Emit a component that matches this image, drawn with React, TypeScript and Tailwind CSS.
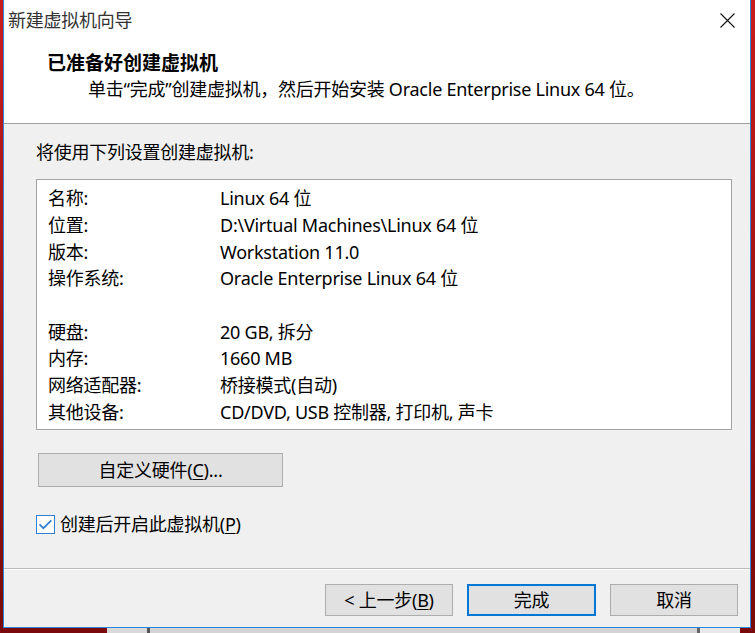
import React from 'react'

const rows: [string, string][] = [
  ['名称:', 'Linux 64 位'],
  ['位置:', 'D:\\Virtual Machines\\Linux 64 位'],
  ['版本:', 'Workstation 11.0'],
  ['操作系统:', 'Oracle Enterprise Linux 64 位'],
  ['', ''],
  ['硬盘:', '20 GB, 拆分'],
  ['内存:', '1660 MB'],
  ['网络适配器:', '桥接模式(自动)'],
  ['其他设备:', 'CD/DVD, USB 控制器, 打印机, 声卡'],
]

function Key({ k }: { k: string }) {
  return <span className="underline underline-offset-2 decoration-1">{k}</span>
}

export default function App() {
  return (
    <div className="w-[755px] h-[633px] overflow-hidden bg-linear-to-b from-[#c81c1e] to-[#7a0a0b] font-['Noto_Sans','Noto_Sans_CJK_SC',sans-serif] text-[18px] tracking-[-0.25px] text-black">
      {/* Window */}
      <div className="ml-[3px] w-[748px] h-[628px] flex flex-col border-x border-b border-[#2a86d8] bg-[#f0f0f0]">
        {/* Title bar + header */}
        <div className="h-[124px] bg-white border-b border-[#a0a0a0]">
          <div className="flex h-[40px] items-center justify-between">
            <span className="pl-[4px] leading-[26px] text-[#333]">新建虚拟机向导</span>
            <span className="flex w-[46px] h-full items-center justify-center">
              <svg width="15" height="15" viewBox="0 0 15 15">
                <path d="M0.5 0.5 L14.5 14.5 M14.5 0.5 L0.5 14.5" stroke="#111" strokeWidth="1.1" fill="none" />
              </svg>
            </span>
          </div>
          <div className="mt-[10px] pl-[43px] text-[19px] font-bold leading-[26px] tracking-normal">已准备好创建虚拟机</div>
          <div className="pl-[84px] leading-[26px]">
            单击<span className="font-['Noto_Sans']">“</span>完成<span className="font-['Noto_Sans']">”</span>创建虚拟机，然后开始安装 Oracle Enterprise Linux 64 位。
          </div>
        </div>

        {/* Body */}
        <div className="h-[445px] pl-[32px] border-b border-[#bcbcbc] flex flex-col">
          <div className="mt-[15px] leading-[26px]">将使用下列设置创建虚拟机:</div>
          <div className="mt-[14px] w-[696px] h-[251px] bg-white border border-[#a3a3a3] pt-[5px] pl-[11px]">
            {rows.map(([label, value], i) => (
              <div key={i} className="flex h-[26.7px] items-center leading-[26px]">
                <span className="w-[172px] shrink-0">{label}</span>
                <span>{value}</span>
              </div>
            ))}
          </div>
          <button className="mt-[23px] ml-[2px] w-[245px] h-[34px] bg-[#e1e1e1] border border-[#adadad] leading-[26px]">
            自定义硬件(<Key k="C" />)...
          </button>
          <label className="mt-[25px] flex h-[24px] items-center gap-[5px]">
            <svg width="19" height="19" viewBox="0 0 19 19">
              <rect x="0.5" y="0.5" width="18" height="18" fill="#fff" stroke="#2f80d4" />
              <path d="M3.5 9.3 L7.4 13.2 L15.3 5.3" stroke="#2f80d4" strokeWidth="1.7" fill="none" />
            </svg>
            <span className="leading-[26px]">创建后开启此虚拟机(<Key k="P" />)</span>
          </label>
        </div>

        {/* Footer */}
        <div className="flex-1 border-t border-white flex justify-end gap-[14px] pr-[12px] pt-[14px]">
          <button className="w-[128px] h-[32px] bg-[#e1e1e1] border border-[#adadad] leading-[26px]">
            &lt; 上一步(<Key k="B" />)
          </button>
          <button className="w-[129px] h-[32px] bg-[#e1e1e1] border-2 border-[#0078d7] leading-[26px]">
            完成
          </button>
          <button className="w-[128px] h-[32px] bg-[#e1e1e1] border border-[#adadad] leading-[26px]">
            取消
          </button>
        </div>
      </div>

      {/* Desktop strip beneath the window */}
      <div className="flex h-[5px]">
        <div className="w-[107px]" />
        <div className="w-[40px] bg-[#d9d9d9]" />
        <div className="w-[3px] bg-[#555]" />
        <div className="w-[547px] bg-[#d4d4d4]" />
        <div className="w-[3px] bg-[#666]" />
        <div className="w-[40px] bg-[#e8e8e8]" />
      </div>
    </div>
  )
}
